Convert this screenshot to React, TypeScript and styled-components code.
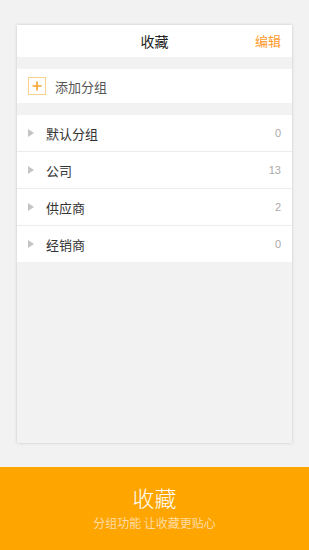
import React from 'react'
import styled, { createGlobalStyle } from 'styled-components'

const GlobalStyle = createGlobalStyle`
  html, body {
    margin: 0;
    padding: 0;
    background: #f2f2f2;
    font-family: "Noto Sans CJK SC", "Liberation Sans", sans-serif;
  }
`

const Page = styled.div`
  width: 309px;
  height: 550px;
  display: flex;
  flex-direction: column;
  background: #f2f2f2;
`

const Stage = styled.div`
  flex: 1;
  padding: 25px 17px 24px;
  display: flex;
`

const Card = styled.div`
  flex: 1;
  background: #f2f2f2;
  box-shadow: 0 0 3px rgba(0, 0, 0, 0.18);
  display: flex;
  flex-direction: column;
  gap: 12px;
`

const Header = styled.div`
  height: 32px;
  background: #fff;
  position: relative;
  display: flex;
  align-items: center;
  justify-content: center;
`

const Title = styled.div`
  font-size: 14px;
  color: #222;
  font-weight: 400;
`

const Edit = styled.div`
  position: absolute;
  right: 11px;
  top: 0;
  line-height: 32px;
  font-size: 13px;
  color: #ff9a2b;
`

const AddRow = styled.div`
  height: 34px;
  background: #fff;
  display: flex;
  align-items: center;
  padding-left: 11px;
  gap: 9px;
  font-size: 13px;
  color: #555;
`

const PlusBox = styled.div`
  width: 16px;
  height: 16px;
  border: 1px solid #fcd28e;
  display: flex;
  align-items: center;
  justify-content: center;
`

const List = styled.div`
  background: #fff;
  display: flex;
  flex-direction: column;
`

const Row = styled.div<{ last?: boolean }>`
  height: 36px;
  border-bottom: ${p => (p.last ? 'none' : '1px solid #ececec')};
  display: flex;
  align-items: center;
  padding: 0 11px;
`

const Arrow = styled.div`
  width: 0;
  height: 0;
  border-top: 4px solid transparent;
  border-bottom: 4px solid transparent;
  border-left: 6px solid #c4c4c4;
  margin-right: 12px;
`

const Label = styled.div`
  flex: 1;
  font-size: 13px;
  color: #333;
`

const Count = styled.div`
  font-size: 11px;
  color: #aaa;
  font-family: "Liberation Sans", sans-serif;
`

const Banner = styled.div`
  height: 83px;
  background: #ffa500;
  display: flex;
  flex-direction: column;
  align-items: center;
  padding-top: 16px;
  box-sizing: border-box;
`

const BannerTitle = styled.div`
  font-size: 22px;
  color: #fff;
  font-weight: 300;
  line-height: 28px;
`

const BannerSub = styled.div`
  margin-top: 4px;
  font-size: 12px;
  color: #ffdca4;
  line-height: 16px;
`

const groups = [
  { name: '默认分组', count: 0 },
  { name: '公司', count: 13 },
  { name: '供应商', count: 2 },
  { name: '经销商', count: 0 },
]

export default function App() {
  return (
    <Page>
      <GlobalStyle />
      <Stage>
        <Card>
          <Header>
            <Title>收藏</Title>
            <Edit>编辑</Edit>
          </Header>
          <AddRow>
            <PlusBox>
              <svg width="10" height="10" viewBox="0 0 10 10">
                <path d="M5 0.5V9.5M0.5 5H9.5" stroke="#f7a12a" strokeWidth="1.6" />
              </svg>
            </PlusBox>
            添加分组
          </AddRow>
          <List>
            {groups.map((g, i) => (
              <Row key={g.name} last={i === groups.length - 1}>
                <Arrow />
                <Label>{g.name}</Label>
                <Count>{g.count}</Count>
              </Row>
            ))}
          </List>
        </Card>
      </Stage>
      <Banner>
        <BannerTitle>收藏</BannerTitle>
        <BannerSub>分组功能 让收藏更贴心</BannerSub>
      </Banner>
    </Page>
  )
}
